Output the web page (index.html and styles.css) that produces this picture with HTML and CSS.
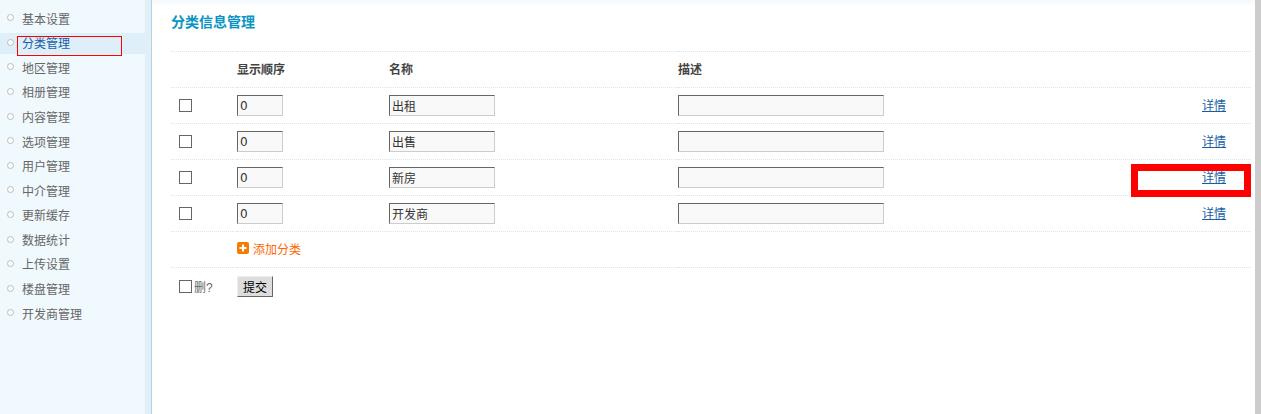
FILE: index.html
```html
<!DOCTYPE html>
<html lang="zh-CN">
<head>
<meta charset="UTF-8">
<meta name="viewport" content="width=device-width, initial-scale=1.0">
<link rel="stylesheet" href="styles.css">
<title>分类信息管理</title>
</head>
<body>

  <aside class="sidebar">
    <ul class="menu">
      <li><a href="#">基本设置</a></li>
      <li class="active"><a href="#">分类管理</a></li>
      <li><a href="#">地区管理</a></li>
      <li><a href="#">相册管理</a></li>
      <li><a href="#">内容管理</a></li>
      <li><a href="#">选项管理</a></li>
      <li><a href="#">用户管理</a></li>
      <li><a href="#">中介管理</a></li>
      <li><a href="#">更新缓存</a></li>
      <li><a href="#">数据统计</a></li>
      <li><a href="#">上传设置</a></li>
      <li><a href="#">楼盘管理</a></li>
      <li><a href="#">开发商管理</a></li>
    </ul>
  </aside>

  <main class="content">
    <h2 class="title">分类信息管理</h2>
    <table class="list">
      <tr class="head">
        <th class="col-check"></th>
        <th class="col-order">显示顺序</th>
        <th class="col-name">名称</th>
        <th class="col-desc">描述</th>
        <th class="col-link"></th>
      </tr>
      <tr>
        <td><input class="check" type="checkbox"></td>
        <td><input class="text order" type="text" value="0"></td>
        <td><input class="text name" type="text" value="出租"></td>
        <td><input class="text desc" type="text"></td>
        <td><a class="detail" href="#">详情</a></td>
      </tr>
      <tr>
        <td><input class="check" type="checkbox"></td>
        <td><input class="text order" type="text" value="0"></td>
        <td><input class="text name" type="text" value="出售"></td>
        <td><input class="text desc" type="text"></td>
        <td><a class="detail" href="#">详情</a></td>
      </tr>
      <tr>
        <td><input class="check" type="checkbox"></td>
        <td><input class="text order" type="text" value="0"></td>
        <td><input class="text name" type="text" value="新房"></td>
        <td><input class="text desc" type="text"></td>
        <td><a class="detail" href="#">详情</a></td>
      </tr>
      <tr>
        <td><input class="check" type="checkbox"></td>
        <td><input class="text order" type="text" value="0"></td>
        <td><input class="text name" type="text" value="开发商"></td>
        <td><input class="text desc" type="text"></td>
        <td><a class="detail" href="#">详情</a></td>
      </tr>
      <tr>
        <td></td>
        <td colspan="4">
          <a class="add" href="#">
            <svg class="add-icon" width="12" height="12" viewBox="0 0 12 12">
              <rect width="12" height="12" rx="2" fill="#f57c00"/>
              <path d="M5 2.500h2V5h2.500v2H7v2.500H5V7H2.500V5H5z" fill="#fff"/>
            </svg>添加分类</a>
        </td>
      </tr>
      <tr class="foot">
        <td><label class="del"><input class="check" type="checkbox">删?</label></td>
        <td colspan="4"><button class="submit" type="button">提交</button></td>
      </tr>
    </table>
  </main>

  <div class="scrollbar"></div>

  <!-- red annotation boxes drawn over the screenshot -->
  <div class="mark mark-menu"></div>
  <div class="mark mark-detail"></div>

</body>
</html>
```

FILE: styles.css
```css
html, body {
  height: 100%;
}
body {
  margin: 0;
  display: flex;
  overflow: hidden;
  background-color: #fff;
  color: #666;
  font-family: "Liberation Sans", "Noto Sans CJK SC", sans-serif;
  font-size: 12px;
}

/* left menu */
.sidebar {
  width: 145px;
  flex-shrink: 0;
  padding-top: 8.3px;
  background-color: #f0f9fd;
  border-right: 6px solid #e0eff8;
  box-shadow: 1px 0 0 #b5d3e3;
}
.menu {
  margin: 0;
  padding: 0;
  list-style: none;
}
.menu li {
  display: flex;
  align-items: center;
  height: 21px;
  margin-bottom: 3.58px;
  padding-left: 7px;
}
.menu li::before {
  content: "";
  width: 5px;
  height: 5px;
  margin: -2px 8px 0 0;
  border: 1px solid #bbb;
  border-radius: 50%;
  background-color: #fff;
}
.menu a {
  margin-top: -1.2px;
  color: #666;
  text-decoration: none;
}
.menu .active {
  background-color: #dfeff9;
}
.menu .active a {
  color: #1a5fa5;
}

/* main area */
.content {
  flex: 1;
  min-width: 0;
  margin-left: 1px;
  padding: 0 4px 0 19px;
  background: linear-gradient(#f3f9fd, #fff 6px);
}
.title {
  height: 51px;
  margin: 0;
  padding-top: 13px;
  box-sizing: border-box;
  color: #0a94c4;
  font-size: 14px;
  line-height: 18px;
}
.list {
  width: 100%;
  border-collapse: collapse;
  table-layout: fixed;
}
.list tr {
  height: 36px;
  border-top: 1px dotted #d5e8f4;
}
.list th {
  padding: 0 0 2px;
  color: #444;
  font-size: 12px;
  text-align: left;
}
.list td {
  padding: 0;
}
.list .foot {
  height: 38px;
}
.col-check { width: 66px; }
.col-order { width: 152px; }
.col-name { width: 289px; }
.col-link { width: 49px; }

.check {
  width: 13px;
  height: 13px;
  margin: -2px 0 0 8px;
  vertical-align: middle;
  appearance: none;
  box-sizing: border-box;
  background-color: #fff;
  border: 1px solid #666;
}
.text {
  height: 21px;
  box-sizing: border-box;
  padding: 0 2px;
  vertical-align: middle;
  background-color: #f9f9f9;
  color: #333;
  font-family: "DejaVu Sans", "Noto Sans CJK SC", sans-serif;
  font-size: 12px;
  border: 1px solid #ccc;
  border-top-color: #666;
  border-left-color: #666;
}
.order { width: 46px; }
.name { width: 106px; }
.desc { width: 206px; }

.detail {
  position: relative;
  top: -1px;
  color: #1a5fa5;
}
.add {
  display: inline-flex;
  align-items: center;
  padding-bottom: 2px;
  color: #f60;
  text-decoration: none;
}
.add-icon {
  margin: -2px 4px 0 0;
}
.del {
  display: flex;
  align-items: center;
  gap: 2px;
  color: #666;
}
.del .check {
  margin-top: 0;
}
.submit {
  width: 36px;
  height: 21px;
  padding: 0;
  background-color: #ddd;
  color: #000;
  font-family: "Liberation Sans", "Noto Sans CJK SC", sans-serif;
  font-size: 12px;
  border: 1px solid #666;
  border-top-color: #eee;
  border-left-color: #eee;
}

.scrollbar {
  width: 6px;
  flex-shrink: 0;
  background-color: #ccc;
}

/* annotations */
.mark {
  position: absolute;
  box-sizing: border-box;
  border-style: solid;
  border-color: #f00;
}
.mark-menu {
  left: 17px;
  top: 36px;
  width: 105px;
  height: 20px;
  border-width: 1px;
}
.mark-detail {
  left: 1131px;
  top: 164px;
  width: 120px;
  height: 33px;
  border-width: 7px;
}
```
